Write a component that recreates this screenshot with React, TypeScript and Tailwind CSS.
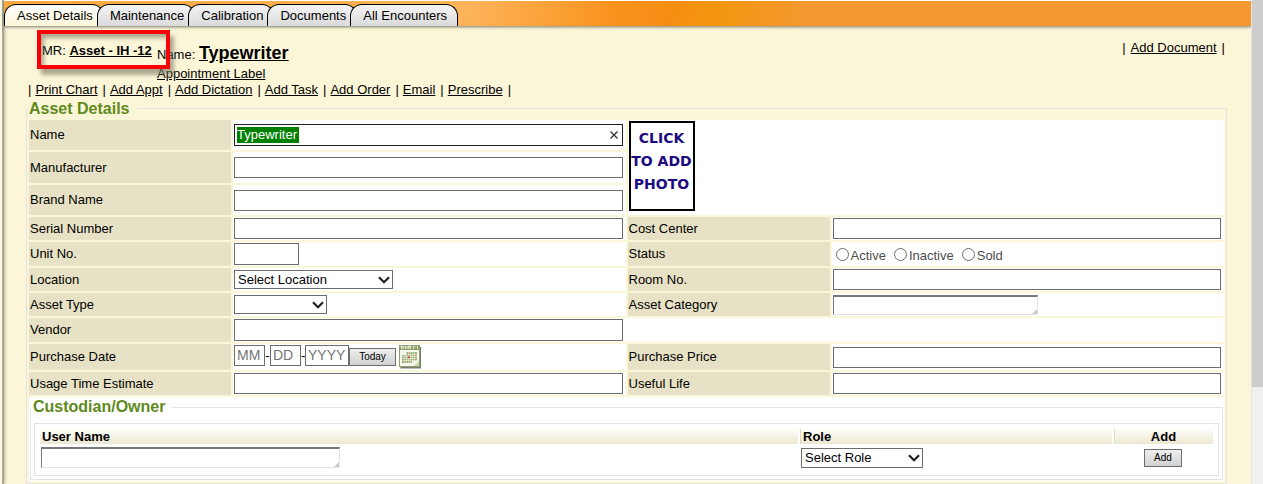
import React from "react";

const tabs = ["Asset Details", "Maintenance", "Calibration", "Documents", "All Encounters"];
const actions = ["Print Chart", "Add Appt", "Add Dictation", "Add Task", "Add Order", "Email", "Prescribe"];

const inputClass = "block h-[21px] w-full border border-[#6d6d70] bg-white px-1 text-[13px] outline-none";
const dateInputClass =
  "h-[21px] border border-[#6d6d70] bg-white pl-[2px] text-[14px] outline-none placeholder:text-[#757575]";

function Label({ id, right = false, children }: { id: string; right?: boolean; children: React.ReactNode }) {
  return (
    <label htmlFor={id} className={`flex items-center bg-[#e7e2c5] pl-px ${right ? "" : "col-start-1"}`}>
      {children}
    </label>
  );
}

function Cell({ children, className = "" }: { children?: React.ReactNode; className?: string }) {
  return <div className={`flex items-center bg-white pl-px pr-[3px] ${className}`}>{children}</div>;
}

function Select({ id, label, text, className }: { id: string; label?: string; text: string; className: string }) {
  return (
    <div className={`grid items-center ${className}`}>
      <select
        id={id}
        aria-label={label}
        className="col-start-1 row-start-1 h-full w-full appearance-none border border-[#6d6d70] bg-white pl-[3px] text-[13px] leading-4 outline-none"
      >
        <option>{text}</option>
      </select>
      <svg
        viewBox="0 0 12 8"
        className="pointer-events-none col-start-1 row-start-1 mr-[3px] h-2 w-3 justify-self-end"
        fill="none"
        stroke="#202020"
        strokeWidth="2.2"
      >
        <path d="M1 1.2 6 6.2 11 1.2" />
      </svg>
    </div>
  );
}

function ResizableText({ id, label, className }: { id: string; label?: string; className: string }) {
  return (
    <div className={`grid ${className}`}>
      <textarea
        id={id}
        aria-label={label}
        rows={1}
        className="col-start-1 row-start-1 block h-full w-full resize-none border border-t-2 border-[#e3e3e3] border-t-[#77777a] border-l-[#77777a] bg-white outline-none"
      />
      <svg
        viewBox="0 0 6 6"
        className="pointer-events-none col-start-1 row-start-1 mr-px mb-px size-[5px] self-end justify-self-end"
        fill="#cbcbcb"
      >
        <path d="M6 0v6H0z" />
      </svg>
    </div>
  );
}

function CalendarIcon() {
  return (
    <svg viewBox="0 0 23 24" className="h-6 w-[23px]">
      <rect x="1.500" y="2" width="20.500" height="21.500" fill="#777a6c" />
      <rect x="0" y="0" width="21" height="22" fill="#8f9f6c" />
      <rect x="1" y="5" width="19" height="16" fill="#f6f8ee" />
      <path
        d="M1.500 1h1v3M4 1v3M4 1l1.500 2L7 1v3M9 4V1h2.500v3M9 2.800h2.500M13.500 1l1.200 1.600L16 1M14.700 2.500V4M18.500 1v2.500"
        stroke="#f3f5e6"
        strokeWidth="0.9"
        fill="none"
      />
      <path d="M7 7h11v9h-5v2H3v-8h4z" fill="#9cab78" />
      <path
        d="M3 9.500h15M3 11.500h15M3 13.500h15M3 15.500h15M5.500 7v11M7.500 7v11M9.500 7v11M11.500 7v11M13.500 7v11M15.500 7v11"
        stroke="#f2f5e6"
        strokeWidth="0.6"
      />
      <rect x="9" y="11.500" width="1.500" height="1.500" fill="#e01515" />
      <path d="M20 16v5h-5z" fill="#cfd8b5" />
    </svg>
  );
}

function TabBar() {
  return (
    <nav className="flex h-[26px] border-t border-white bg-[linear-gradient(100deg,#fba93f_0,#fdb359_460px,#f9931f_600px,#f68d12_660px,#f2960f_700px,#f59830_790px)] pt-[3px] shadow-[0_1px_3px_#77776a]">
      {tabs.map((tab, i) => (
        <a
          key={tab}
          href="#"
          className={`-mr-[7px] flex h-[22px] items-center rounded-t-[12px] border border-b-0 border-black pl-3 pr-[10px] leading-4 ${
            i === 0
              ? "bg-linear-to-b from-white to-[#fcf6d9]"
              : "bg-linear-to-b from-[#f4f4f4] to-[#dadada]"
          }`}
        >
          {tab}
        </a>
      ))}
    </nav>
  );
}

function Header() {
  return (
    <header className="relative flex items-start pl-[38px] pr-[26px]">
      <p className="w-[115px] pt-[17px] leading-4">
        MR:{" "}
        <a href="#" className="font-bold underline">
          Asset - IH -12
        </a>
      </p>
      <div className="pt-[16px]">
        <p className="leading-[22px]">
          Name:{" "}
          <a href="#" className="text-[18px] font-bold underline">
            Typewriter
          </a>
        </p>
        <a href="#" className="block leading-[15px] underline">
          Appointment Label
        </a>
      </div>
      <p className="ml-auto pt-[14px] leading-4">
        |<a href="#" className="mx-[5px] underline">Add Document</a>|
      </p>
      <div className="pointer-events-none absolute top-1 left-[33px] h-[39px] w-[133px] border-4 border-[#fb0007] shadow-[4px_6px_4px_#77755f99,inset_3px_4px_4px_#77755f99]" />
    </header>
  );
}

function AssetForm() {
  return (
    <div className="grid grid-cols-[202px_minmax(0,1fr)_202px_minmax(0,1fr)] grid-rows-[30px_31px_30px_23px_24px_23px_23px_24px_26px_23px] gap-[2px]">
      <Label id="name">Name</Label>
      <Cell>
        <div className="flex h-[22px] w-full items-center border border-[#202020] bg-white px-[2px]">
          <input
            id="name"
            defaultValue="Typewriter"
            className="h-4 w-[62px] bg-[#008000] text-[13px] leading-4 text-white outline-none"
          />
          <button aria-label="Clear name" className="mr-[2px] ml-auto">
            <svg viewBox="0 0 8 8" className="size-2" stroke="#333" strokeWidth="1.3">
              <path d="M.5.5l7 7M7.500.5l-7 7" />
            </svg>
          </button>
        </div>
      </Cell>
      <div className="col-span-2 row-span-3 bg-white p-px">
        <button className="h-[90px] w-[66px] border-2 border-black bg-white pb-[10px] font-['DejaVu_Sans',sans-serif] text-[14px] leading-[23px] font-bold whitespace-nowrap text-[#1b0a80]">
          <span className="flex flex-col items-center">
            <span>CLICK</span>
            <span>TO ADD</span>
            <span>PHOTO</span>
          </span>
        </button>
      </div>

      <Label id="manufacturer">Manufacturer</Label>
      <Cell><input id="manufacturer" className={inputClass} /></Cell>

      <Label id="brand">Brand Name</Label>
      <Cell><input id="brand" className={inputClass} /></Cell>

      <Label id="serial">Serial Number</Label>
      <Cell><input id="serial" className={inputClass} /></Cell>
      <Label right id="cost">Cost Center</Label>
      <Cell><input id="cost" className={inputClass} /></Cell>

      <Label id="unit">Unit No.</Label>
      <Cell>
        <input id="unit" className="h-[22px] w-[65px] border border-[#6d6d70] bg-white px-1 outline-none" />
      </Cell>
      <Label right id="active">Status</Label>
      <Cell className="text-[#4d4d4d]">
        {["Active", "Inactive", "Sold"].map((status) => (
          <label key={status} className="mr-[5px] flex items-center gap-[2px] pl-[3px]">
            <input
              type="radio"
              id={status.toLowerCase()}
              name="status"
              className="size-[13px] appearance-none rounded-full border border-[#6d6d70] bg-white"
            />
            <span className="pt-[3px]">{status}</span>
          </label>
        ))}
      </Cell>

      <Label id="location">Location</Label>
      <Cell><Select id="location" text="Select Location" className="h-[19px] w-[159px]" /></Cell>
      <Label right id="room">Room No.</Label>
      <Cell><input id="room" className={inputClass} /></Cell>

      <Label id="type">Asset Type</Label>
      <Cell><Select id="type" text="" className="h-[19px] w-[93px]" /></Cell>
      <Label right id="category">Asset Category</Label>
      <Cell><ResizableText id="category" className="h-5 w-[205px]" /></Cell>

      <Label id="vendor">Vendor</Label>
      <div className="col-span-3 grid grid-cols-[minmax(0,1fr)_202px_minmax(0,1fr)] gap-[2px] bg-white">
        <Cell>
          <input id="vendor" className="block h-[22px] w-full border border-[#6d6d70] bg-white px-1 outline-none" />
        </Cell>
      </div>

      <Label id="month">Purchase Date</Label>
      <Cell>
        <div className="flex h-6 items-start">
          <input id="month" aria-label="Month" placeholder="MM" className={`w-[31px] ${dateInputClass}`} />
          <span className="w-[5px] text-center leading-[21px]">-</span>
          <input aria-label="Day" placeholder="DD" className={`w-[31px] ${dateInputClass}`} />
          <span className="w-1 text-center leading-[21px]">-</span>
          <input aria-label="Year" placeholder="YYYY" className={`w-11 ${dateInputClass}`} />
          <button className="mt-[3px] h-[18px] w-[47px] border border-[#6d6d70] bg-linear-to-b from-[#eeeeee] to-[#d2d2d2] text-[10px] leading-4">
            Today
          </button>
          <button aria-label="Open calendar" className="ml-[3px]">
            <CalendarIcon />
          </button>
        </div>
      </Cell>
      <Label right id="price">Purchase Price</Label>
      <Cell><input id="price" className={inputClass} /></Cell>

      <Label id="usage">Usage Time Estimate</Label>
      <Cell><input id="usage" className={inputClass} /></Cell>
      <Label right id="life">Useful Life</Label>
      <Cell><input id="life" className={inputClass} /></Cell>
    </div>
  );
}

const headCell = "h-[15px] bg-linear-to-b from-[#fdfdf9] to-[#ece8d1] bg-clip-padding py-0 leading-[15px] font-bold";

function Custodian() {
  return (
    <section className="mt-[2px] bg-white px-px pb-px">
      <div className="flex items-center">
        <span className="h-[10px] w-px self-end border-l border-[#e3e3e6]" />
        <h2 className="pr-[7px] pl-[2px] text-[16px] leading-5 font-bold text-[#5f8a1c]">Custodian/Owner</h2>
        <div className="h-[10px] grow self-end border-t border-r border-[#e3e3e6]" />
      </div>
      <div className="border border-t-0 border-[#e3e3e6] px-[3px] pt-[6px] pb-[3px]">
        <div className="border border-[#e3e3e6] px-[5px] pt-[5px] pb-[7px]">
          <table className="w-full table-fixed border-collapse">
            <colgroup>
              <col />
              <col className="w-[314px]" />
              <col className="w-[100px]" />
            </colgroup>
            <thead>
              <tr>
                <th className={`${headCell} border-r-2 border-white pl-[2px] text-left`}>User Name</th>
                <th className={`${headCell} border-r-2 border-white pl-[3px] text-left shadow-[inset_1px_0_#e0dbb8]`}>
                  Role
                </th>
                <th className={`${headCell} text-center shadow-[inset_1px_0_#e0dbb8]`}>Add</th>
              </tr>
            </thead>
            <tbody>
              <tr>
                <td className="pt-[3px] pl-px align-top">
                  <ResizableText id="user" label="User Name" className="h-[21px] w-[299px]" />
                </td>
                <td className="pt-[4px] pl-[2px] align-top">
                  <Select id="role" label="Role" text="Select Role" className="h-5 w-[122px]" />
                </td>
                <td className="pt-[5px] text-center align-top">
                  <button className="mx-auto block h-[18px] w-[38px] border border-[#6d6d70] bg-linear-to-b from-[#eeeeee] to-[#d2d2d2] text-[10px] leading-4">
                    Add
                  </button>
                </td>
              </tr>
            </tbody>
          </table>
        </div>
      </div>
    </section>
  );
}

export default function App() {
  return (
    <div className="flex min-h-screen bg-[#fcf6d9] font-['Liberation_Sans',Arial,sans-serif] text-[13px] text-black">
      <div className="w-1 shrink-0 border-r-2 border-[#aaa897] bg-[#fffbe2] shadow-[1px_0_3px_#b7b39a]" />
      <main className="min-w-0 grow">
        <TabBar />
        <Header />
        <p className="flex gap-1 pt-[1px] pl-6 leading-4">
          <span>|</span>
          {actions.map((action) => (
            <React.Fragment key={action}>
              <a href="#" className="mr-px underline">{action}</a>
              <span>|</span>
            </React.Fragment>
          ))}
        </p>
        <section className="mr-6 ml-[22px]">
          <div className="flex items-center">
            <span className="h-[11px] w-px self-end border-l border-[#e3e3e6]" />
            <h1 className="pr-[7px] pl-[2px] text-[16px] leading-[21px] font-bold text-[#5f8a1c]">Asset Details</h1>
            <div className="h-[11px] grow self-end border-t border-r border-[#e3e3e6]" />
          </div>
          <div className="border border-t-0 border-[#e3e3e6] px-[2px] pt-px pb-[2px]">
            <AssetForm />
            <Custodian />
          </div>
        </section>
      </main>
      <aside aria-label="Page scroll position" className="w-3 shrink-0 border-l border-[#e3e3e3] bg-[#f0f0f0]">
        <div className="h-[387px] bg-[#cdcdcd]" />
      </aside>
    </div>
  );
}
